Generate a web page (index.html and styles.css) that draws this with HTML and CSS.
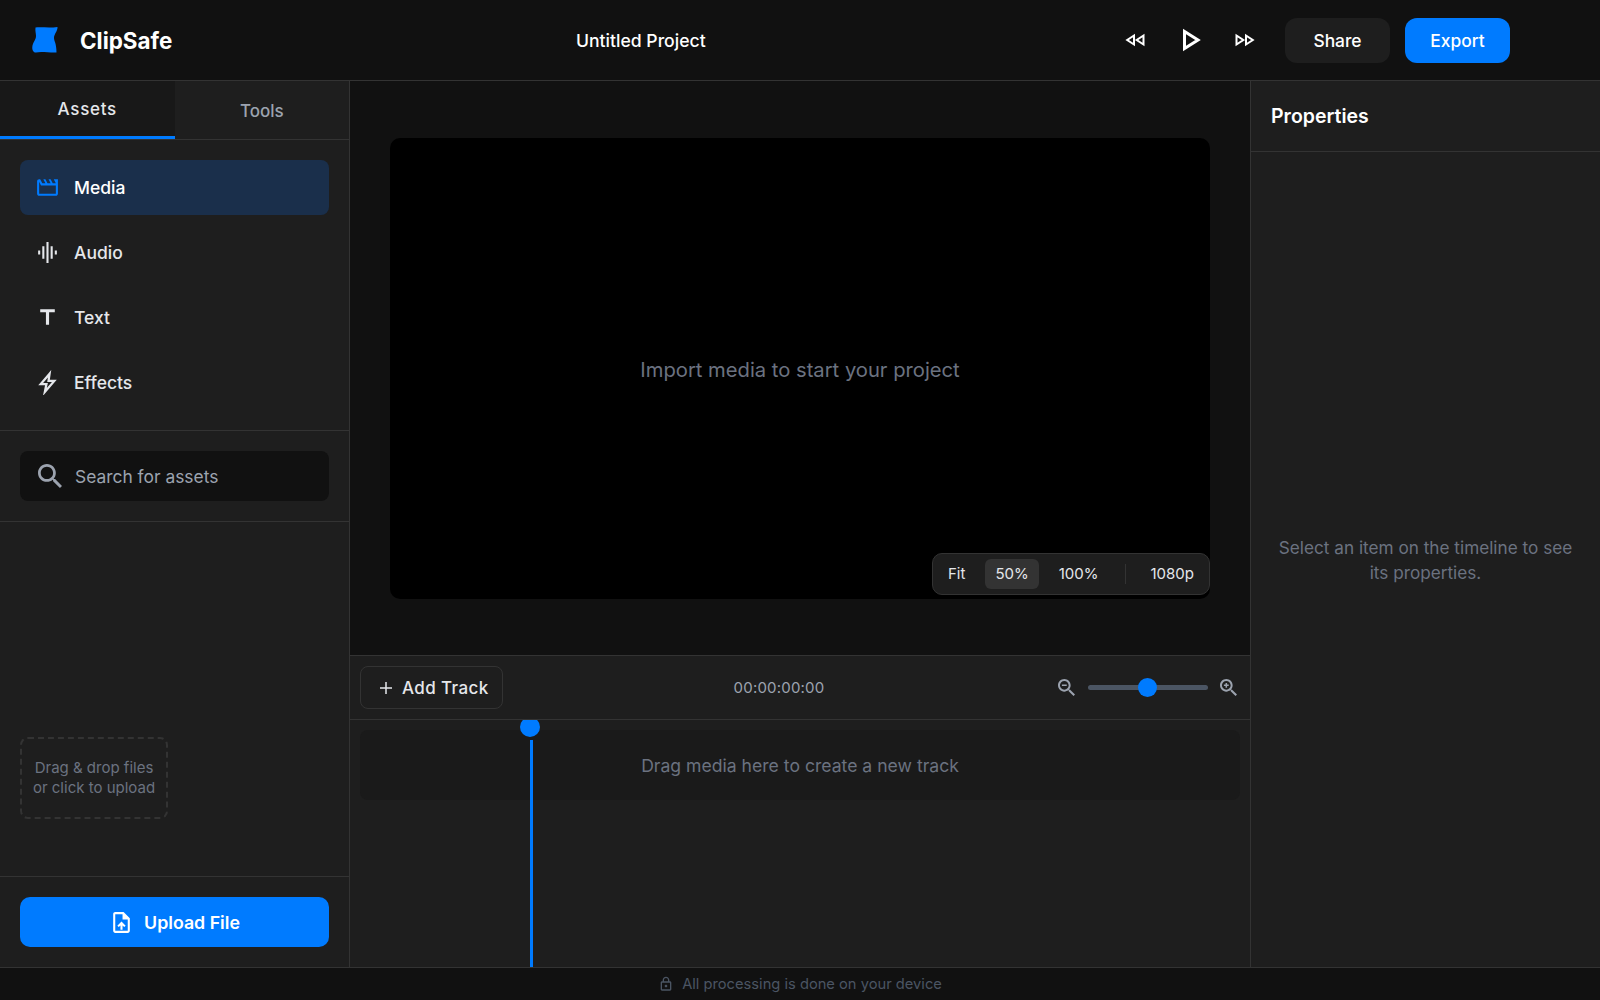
FILE: index.html
```html
<!DOCTYPE html>
<html lang="en">
<head>
<meta charset="utf-8">
<title>ClipSafe</title>
<link rel="stylesheet" href="styles.css">
</head>
<body>
<div class="app">
  <header class="topbar">
    <div class="brand">
      <svg class="logo" width="26" height="26" viewBox="0 0 26 26"><path d="M3.500 0.500C10 0 18 1.200 25.500 0C25.800 4 22 7 22 11C22 14 24.500 16 24.500 25.500C18 26 9 24 4 25.500C1.500 25.800 0 23 0.300 20C0.600 15.500 4 13 4 9C4 6 3 4 3.500 0.500Z" fill="#007bff"/></svg>
      <span class="brand-name">ClipSafe</span>
    </div>
    <div class="project">Untitled Project</div>
    <div class="controls">
      <svg class="ctl ctl-rew" width="20" height="14" viewBox="0 0 20 14"><path d="M9 2.500V11.500L2.200 7ZM18.500 2.500V11.500L11.700 7Z" fill="none" stroke="#fff" stroke-width="2"/></svg>
      <svg class="ctl ctl-play" width="18" height="24" viewBox="0 0 18 24"><path d="M1.500 3.500V20.500L15 12Z" fill="none" stroke="#fff" stroke-width="3"/></svg>
      <svg class="ctl ctl-fwd" width="20" height="14" viewBox="0 0 20 14"><path d="M1.500 2.500V11.500L8.300 7ZM11 2.500V11.500L17.800 7Z" fill="none" stroke="#fff" stroke-width="2"/></svg>
      <button class="btn btn-share">Share</button>
      <button class="btn btn-export">Export</button>
    </div>
  </header>
  <div class="workspace">
    <aside class="sidebar">
      <div class="tabs">
        <div class="tab tab-active">Assets</div>
        <div class="tab">Tools</div>
      </div>
      <nav class="nav">
        <div class="nav-item nav-active">
          <svg viewBox="0 0 24 24"><path fill="#007bff" d="M4 6.470 5.760 10H20v8H4V6.470M22 4h-4l2 4h-3l-2-4h-2l2 4h-3l-2-4H8l2 4H7L5 4H4c-1.100 0-1.990.900-1.990 2L2 18c0 1.100.900 2 2 2h16c1.100 0 2-.900 2-2V4z"/></svg>
          <span>Media</span>
        </div>
        <div class="nav-item">
          <svg viewBox="0 0 24 24"><path fill="#e5e7eb" d="M7 18h2V6H7v12zm4 4h2V2h-2v20zm-8-8h2v-4H3v4zm12 4h2V6h-2v12zm4-8v4h2v-4h-2z"/></svg>
          <span>Audio</span>
        </div>
        <div class="nav-item">
          <svg viewBox="0 0 24 24"><path fill="#e5e7eb" d="M5 4v3h5.500v12h3V7H19V4z"/></svg>
          <span>Text</span>
        </div>
        <div class="nav-item">
          <svg viewBox="0 0 24 24"><path d="M14 3.500 5.500 13.500H11L9.500 21 18.500 10.500H13Z" stroke="#e5e7eb" stroke-width="2.200" fill="none"/></svg>
          <span>Effects</span>
        </div>
      </nav>
      <div class="search-wrap">
        <div class="search">
          <svg width="24" height="24" viewBox="3 3 17.500 17.500"><path fill="#9ca3af" d="M15.500 14h-.790l-.280-.270C15.410 12.590 16 11.110 16 9.500 16 5.910 13.090 3 9.500 3S3 5.910 3 9.500 5.910 16 9.500 16c1.610 0 3.090-.590 4.230-1.570l.270.280v.790l5 4.990L20.490 19l-4.990-5zm-6 0C7.010 14 5 11.990 5 9.500S7.010 5 9.500 5 14 7.010 14 9.500 11.990 14 9.500 14z"/></svg>
          <span>Search for assets</span>
        </div>
      </div>
      <div class="drop-area">
        <div class="dropzone">Drag &amp; drop files<br>or click to upload</div>
      </div>
      <div class="upload-wrap">
        <button class="upload">
          <svg width="25" height="25" viewBox="0 0 24 24"><path fill="#fff" d="M14 2H6c-1.100 0-1.990.900-1.990 2L4 20c0 1.100.890 2 1.990 2H18c1.100 0 2-.900 2-2V8l-6-6zm4 18H6V4h7v5h5v11zM8 15.010l1.410 1.410L11 14.840V19h2v-4.160l1.590 1.590L16 15.010 12.010 11 8 15.010z"/></svg>
          <span>Upload File</span>
        </button>
      </div>
    </aside>
    <main class="center">
      <section class="stage">
        <div class="video">
          <div class="video-msg">Import media to start your project</div>
          <div class="zoombar">
            <span class="zb-item">Fit</span>
            <span class="zb-item zb-active">50%</span>
            <span class="zb-item">100%</span>
            <span class="zb-sep"></span>
            <span class="zb-item zb-res">1080p</span>
          </div>
        </div>
      </section>
      <section class="tl-head">
        <button class="add-track">
          <svg width="12" height="12" viewBox="0 0 12 12"><path d="M6 0V12M0 6H12" stroke="#e5e7eb" stroke-width="1.500" fill="none"/></svg>
          <span>Add Track</span>
        </button>
        <div class="timecode">00:00:00:00</div>
        <div class="zoom-ctl">
          <svg width="17" height="17" viewBox="3 3 17.500 17.500"><path fill="#9ca3af" d="M15.500 14h-.790l-.280-.270C15.410 12.590 16 11.110 16 9.500 16 5.910 13.090 3 9.500 3S3 5.910 3 9.500 5.910 16 9.500 16c1.610 0 3.090-.590 4.230-1.570l.270.280v.790l5 4.990L20.490 19l-4.990-5zm-6 0C7.010 14 5 11.990 5 9.500S7.010 5 9.500 5 14 7.010 14 9.500 11.990 14 9.500 14zM7 8.700h5v1.600H7z"/></svg>
          <div class="slider"><div class="thumb"></div></div>
          <svg width="17" height="17" viewBox="3 3 17.500 17.500"><path fill="#9ca3af" d="M15.500 14h-.790l-.280-.270C15.410 12.590 16 11.110 16 9.500 16 5.910 13.090 3 9.500 3S3 5.910 3 9.500 5.910 16 9.500 16c1.610 0 3.090-.590 4.230-1.570l.270.280v.790l5 4.990L20.490 19l-4.990-5zm-6 0C7.010 14 5 11.990 5 9.500S7.010 5 9.500 5 14 7.010 14 9.500 11.990 14 9.500 14zM12 10.300h-1.700V12H8.700v-1.700H7V8.700h1.700V7h1.600v1.700H12z"/></svg>
        </div>
      </section>
      <section class="tl-body">
        <div class="track-empty">Drag media here to create a new track</div>
        <div class="playhead"><div class="ph-knob"></div><div class="ph-line"></div></div>
      </section>
    </main>
    <aside class="props">
      <h2 class="props-title">Properties</h2>
      <div class="props-empty">Select an item on the timeline to see its properties.</div>
    </aside>
  </div>
  <footer class="status">
    <svg width="16" height="16" viewBox="0 0 24 24"><path fill="#4b5563" d="M18 8h-1V6c0-2.760-2.240-5-5-5S7 3.240 7 6v2H6c-1.100 0-2 .900-2 2v10c0 1.100.900 2 2 2h12c1.100 0 2-.900 2-2V10c0-1.100-.900-2-2-2zM9 6c0-1.660 1.340-3 3-3s3 1.340 3 3v2H9V6zm9 14H6V10h12v10zm-6-3c1.100 0 2-.900 2-2s-.900-2-2-2-2 .900-2 2 .900 2 2 2z"/></svg>
    <span>All processing is done on your device</span>
  </footer>
</div>
</body>
</html>
```

FILE: styles.css
```css
* { box-sizing: border-box; }
html, body { margin: 0; height: 100%; }
body { background: #111; color: #fff; font-family: Inter, "Liberation Sans", sans-serif; overflow: hidden; }
button { font-family: inherit; border: 0; cursor: pointer; }
svg { display: block; flex: none; }
.app { width: 1600px; height: 1000px; display: flex; flex-direction: column; }

.topbar { height: 81px; flex: none; background: #111; border-bottom: 1px solid #333; display: flex; align-items: center; padding: 0 90px 0 32px; }
.brand { width: 500px; display: flex; align-items: center; gap: 22px; }
.logo { width: 26px; height: 26px; }
.brand-name { font-size: 22.400px; font-weight: 700; }
.project { font-size: 17.600px; font-weight: 500; margin-left: 44px; }
.controls { margin-left: auto; display: flex; align-items: center; }
.ctl-rew { margin-right: 38px; }
.ctl-play { margin-right: 34px; }
.ctl-fwd { margin-right: 30px; }
.btn { height: 45px; width: 105px; border-radius: 12px; color: #fff; font-size: 17.400px; font-weight: 500; }
.btn-share { background: #1e1e1e; margin-right: 15px; }
.btn-export { background: #007bff; }

.workspace { flex: 1; display: flex; min-height: 0; }
.sidebar { width: 350px; flex: none; background: #1e1e1e; border-right: 1px solid #333; display: flex; flex-direction: column; }
.tabs { display: flex; height: 59px; flex: none; border-bottom: 1px solid #333; }
.tab { flex: 1; display: flex; align-items: center; justify-content: center; font-size: 17px; font-weight: 500; color: #9ca3af; padding-top: 1px; }
.tab-active { color: #e5e7eb; background: #181818; border-bottom: 3px solid #007bff; padding-top: 1px; letter-spacing: 0.700px; }
.nav { padding: 20px; display: flex; flex-direction: column; gap: 10px; border-bottom: 1px solid #333; }
.nav-item { height: 55px; display: flex; align-items: center; gap: 14px; padding: 0 15px; border-radius: 8px; color: #e5e7eb; font-size: 17.500px; font-weight: 500; }
.nav-item svg { width: 25px; height: 25px; }
.nav-active { background: #1a2f4b; color: #fff; }
.search-wrap { padding: 20px; border-bottom: 1px solid #333; }
.search { height: 50px; background: #111; border-radius: 8px; display: flex; align-items: center; gap: 13px; padding: 0 16px 0 18px; color: #9ca3af; font-size: 17.400px; }
.drop-area { flex: 1; display: flex; align-items: flex-end; padding: 0 20px 57px; }
.dropzone { width: 148px; height: 82px; border: 2px dashed #333; border-radius: 8px; display: flex; align-items: center; justify-content: center; text-align: center; font-size: 15px; line-height: 20px; color: #6b7280; }
.upload-wrap { padding: 20px; border-top: 1px solid #333; }
.upload { width: 100%; height: 50px; background: #007bff; border-radius: 10px; color: #fff; font-size: 17.800px; font-weight: 600; display: flex; align-items: center; justify-content: center; gap: 10px; }

.center { flex: 1; min-width: 0; display: flex; flex-direction: column; background: #1e1e1e; }
.stage { height: 574px; flex: none; background: #111; display: flex; align-items: center; justify-content: center; }
.video { position: relative; width: 820px; height: 461px; background: #000; border-radius: 10px; display: flex; align-items: center; justify-content: center; }
.video-msg { font-size: 20.200px; color: #6b7280; padding-top: 2px; }
.zoombar { position: absolute; right: 0; bottom: 4px; height: 42px; background: #1e1e1e; border: 1px solid #333; border-radius: 10px; display: flex; align-items: center; padding: 0 15px; font-size: 15px; font-weight: 400; color: #e5e7eb; }
.zb-item { padding: 0 10px; height: 30px; display: flex; align-items: center; border-radius: 6px; }
.zb-item:first-child { padding: 0; margin-right: 20px; }
.zb-active { background: #333; margin-right: 10px; }
.zb-sep { width: 1px; height: 20px; background: #333; margin: 0 15px 0 16px; }
.zb-res { padding: 0 0 0 10px; }

.tl-head { height: 65px; flex: none; border-top: 1px solid #333; border-bottom: 1px solid #333; display: flex; align-items: center; padding: 0 13px 0 10px; }
.add-track { width: 143px; height: 43px; background: transparent; border: 1px solid #333; border-radius: 8px; color: #e5e7eb; font-size: 17px; font-weight: 500; display: flex; align-items: center; gap: 10px; padding: 0 0 0 19px; letter-spacing: 0.400px; }
.timecode { width: 150px; text-align: center; margin-left: 201px; color: #9ca3af; font-size: 15px; letter-spacing: 0.200px; }
.zoom-ctl { margin-left: auto; display: flex; align-items: center; gap: 12.500px; }
.slider { width: 120px; height: 5px; border-radius: 3px; background: #4b5563; position: relative; }
.thumb { position: absolute; left: 50%; top: 50%; width: 19px; height: 19px; margin: -9.500px 0 0 -9.500px; border-radius: 50%; background: #007bff; }

.tl-body { flex: 1; position: relative; padding: 10px; overflow: hidden; }
.track-empty { height: 70px; background: #1a1a1a; border-radius: 8px; display: flex; align-items: center; justify-content: center; font-size: 17.600px; color: #6b7280; }
.playhead { position: absolute; left: 170px; top: 0; bottom: 0; width: 20px; }
.ph-knob { position: absolute; left: 0; top: -3px; width: 20px; height: 20px; border-radius: 50%; background: #007bff; }
.ph-line { position: absolute; left: 10px; top: 20px; bottom: 0; width: 3px; background: #007bff; }

.props { width: 350px; flex: none; background: #1e1e1e; border-left: 1px solid #333; display: flex; flex-direction: column; }
.props-title { margin: 0; height: 71px; flex: none; border-bottom: 1px solid #333; padding: 0 20px; display: flex; align-items: center; font-size: 19.500px; font-weight: 600; }
.props-empty { flex: 1; display: flex; align-items: center; text-align: center; padding: 0 20px; color: #6b7280; font-size: 17.200px; line-height: 25px; }

.status { height: 33px; flex: none; background: #111; border-top: 1px solid #333; display: flex; align-items: center; justify-content: center; gap: 8px; font-size: 14.700px; color: #4b5563; }
```
